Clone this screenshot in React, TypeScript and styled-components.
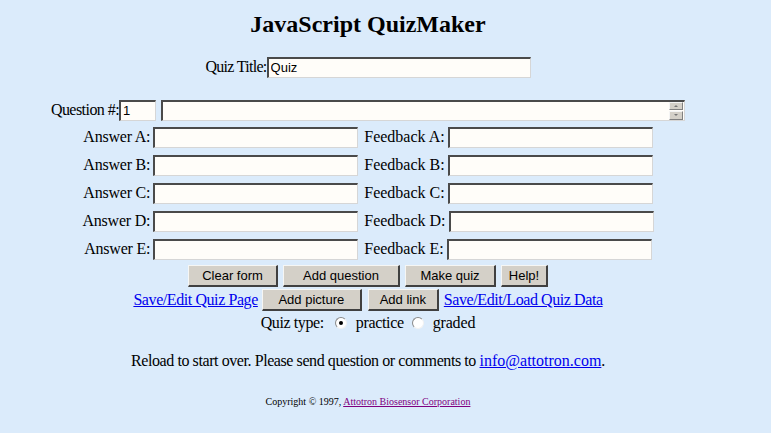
import React from 'react';
import styled, { createGlobalStyle } from 'styled-components';

const GlobalStyle = createGlobalStyle`
  html, body {
    margin: 0;
    padding: 0;
    background: #dbebfb;
  }
  body {
    font-family: "Liberation Serif", "Times New Roman", serif;
    font-size: 16px;
    color: #000;
  }
`;

// content is centred on a 736px column, as in the original page
const Page = styled.div`
  width: 736px;
  height: 433px;
  padding-top: 10px;
  box-sizing: border-box;
  background: #dbebfb;
  display: flex;
  flex-direction: column;
  align-items: stretch;
  overflow: hidden;
`;

const Title = styled.h2`
  margin: 0;
  height: 28px;
  line-height: 28px;
  text-align: center;
  font-size: 24px;
  font-weight: bold;
`;

const Line = styled.div<{ $h: number; $mt?: number }>`
  display: flex;
  justify-content: center;
  align-items: center;
  height: ${p => p.$h}px;
  margin-top: ${p => p.$mt ?? 0}px;
  white-space: nowrap;
`;

const Label = styled.span<{ $gap?: number; $ml?: number; $ls?: number }>`
  margin-left: ${p => p.$ml ?? 0}px;
  margin-right: ${p => p.$gap ?? 0}px;
  letter-spacing: ${p => p.$ls ?? 0}px;
`;

const TextBox = styled.input<{ $w: number; $ml?: number }>`
  box-sizing: border-box;
  width: ${p => p.$w}px;
  height: 21px;
  margin: 0 0 0 ${p => p.$ml ?? 0}px;
  padding: 1px 2px;
  border-style: solid;
  border-width: 2px 1px 1px 2px;
  border-color: #4a4a4a #d6d6d6 #d6d6d6 #4a4a4a;
  background: #fffdf9;
  font-family: "Liberation Sans", Arial, sans-serif;
  font-size: 13px;
  color: #000;
  outline: none;
`;

const AreaBox = styled.div`
  box-sizing: border-box;
  width: 524px;
  height: 21px;
  margin-left: 5px;
  display: flex;
  border-style: solid;
  border-width: 2px 1px 1px 2px;
  border-color: #4a4a4a #d6d6d6 #d6d6d6 #4a4a4a;
  background: #fffdf9;
`;

const Area = styled.textarea`
  flex: 1;
  border: none;
  resize: none;
  background: transparent;
  padding: 0 2px;
  margin: 0;
  outline: none;
  overflow: hidden;
  font-family: "Liberation Mono", monospace;
  font-size: 13px;
`;

const ScrollCol = styled.div`
  width: 14px;
  display: flex;
  flex-direction: column;
  gap: 1px;
  padding: 0 1px 0 0;
`;

const ScrollBtn = styled.div`
  flex: 1;
  background: #d4d0c8;
  border-style: solid;
  border-width: 1px;
  border-color: #f4f4f4 #808080 #808080 #f4f4f4;
  display: flex;
  align-items: center;
  justify-content: center;
`;

const Arrow = styled.span<{ $down?: boolean }>`
  width: 0;
  height: 0;
  border-left: 2px solid transparent;
  border-right: 2px solid transparent;
  ${p => p.$down ? 'border-top: 2px solid #777;' : 'border-bottom: 2px solid #777;'}
`;

const Button = styled.button<{ $w: number; $ml?: number }>`
  box-sizing: border-box;
  width: ${p => p.$w}px;
  height: 22px;
  margin: 0 0 0 ${p => p.$ml ?? 0}px;
  padding: 0;
  background: #d4d0c8;
  border-style: solid;
  border-width: 1px 2px 2px 1px;
  border-color: #f6f6f4 #404040 #404040 #f6f6f4;
  font-family: "Liberation Sans", Arial, sans-serif;
  font-size: 13px;
  color: #000;
  line-height: 18px;
`;

const Link = styled.a<{ $visited?: boolean; $ls?: number; $ml?: number }>`
  color: ${p => p.$visited ? '#800080' : '#0000ee'};
  text-decoration: underline;
  letter-spacing: ${p => p.$ls ?? 0}px;
  margin-left: ${p => p.$ml ?? 0}px;
`;

const Radio = styled.span<{ $checked?: boolean }>`
  box-sizing: border-box;
  width: 12px;
  height: 12px;
  border-radius: 50%;
  border: 1px solid;
  border-color: #8a8a8a #f2f2f2 #f2f2f2 #8a8a8a;
  background: #fff;
  display: inline-flex;
  align-items: center;
  justify-content: center;
  &::after {
    content: '';
    width: 4px;
    height: 4px;
    border-radius: 50%;
    background: ${p => p.$checked ? '#000' : 'transparent'};
  }
`;

const Note = styled.div<{ $mt: number }>`
  margin-top: ${p => p.$mt}px;
  text-align: center;
  height: 20px;
  line-height: 20px;
  letter-spacing: -0.42px;
`;

const Small = styled.div<{ $mt: number }>`
  margin-top: ${p => p.$mt}px;
  text-align: center;
  font-size: 10px;
  line-height: 14px;
`;

const letters = ['A', 'B', 'C', 'D', 'E'];

export default function App() {
  return (
    <Page>
      <GlobalStyle />
      <Title>JavaScript QuizMaker</Title>

      <Line $h={22} $mt={18}>
        <Label $ls={-0.7}>Quiz Title:</Label>
        <TextBox $w={264} defaultValue="Quiz" />
      </Line>

      <Line $h={26} $mt={19}>
        <Label $ls={-0.55}>Question #:</Label>
        <TextBox $w={37} defaultValue="1" />
        <AreaBox>
          <Area rows={1} />
          <ScrollCol>
            <ScrollBtn><Arrow /></ScrollBtn>
            <ScrollBtn><Arrow $down /></ScrollBtn>
          </ScrollCol>
        </AreaBox>
      </Line>

      {letters.map(l => (
        <Line key={l} $h={28}>
          <Label $gap={3} $ls={-0.22}>Answer {l}:</Label>
          <TextBox $w={205} />
          <Label $gap={3} $ml={6}>Feedback {l}:</Label>
          <TextBox $w={205} />
        </Line>
      ))}

      <Line $h={24} $mt={1}>
        <Button $w={90}>Clear form</Button>
        <Button $w={117} $ml={5}>Add question</Button>
        <Button $w={91} $ml={5}>Make quiz</Button>
        <Button $w={47} $ml={5}>Help!</Button>
      </Line>

      <Line $h={24}>
        <Link href="#" $ls={-0.42}>Save/Edit Quiz Page</Link>
        <Button $w={100} $ml={4}>Add picture</Button>
        <Button $w={71} $ml={6}>Add link</Button>
        <Link href="#" $ls={-0.42} $ml={5}>Save/Edit/Load Quiz Data</Link>
      </Line>

      <Line $h={22}>
        <Label $gap={11} $ls={-0.4}>Quiz type:</Label>
        <Radio $checked />
        <Label $ml={9} $gap={8} $ls={-0.35}>practice</Label>
        <Radio />
        <Label $ml={9} $ls={-0.15}>graded</Label>
      </Line>

      <Note $mt={17}>
        Reload to start over. Please send question or comments to{' '}
        <Link href="#">info@attotron.com</Link>.
      </Note>

      <Small $mt={24}>
        Copyright © 1997, <Link href="#" $visited>Attotron Biosensor Corporation</Link>
      </Small>
    </Page>
  );
}
